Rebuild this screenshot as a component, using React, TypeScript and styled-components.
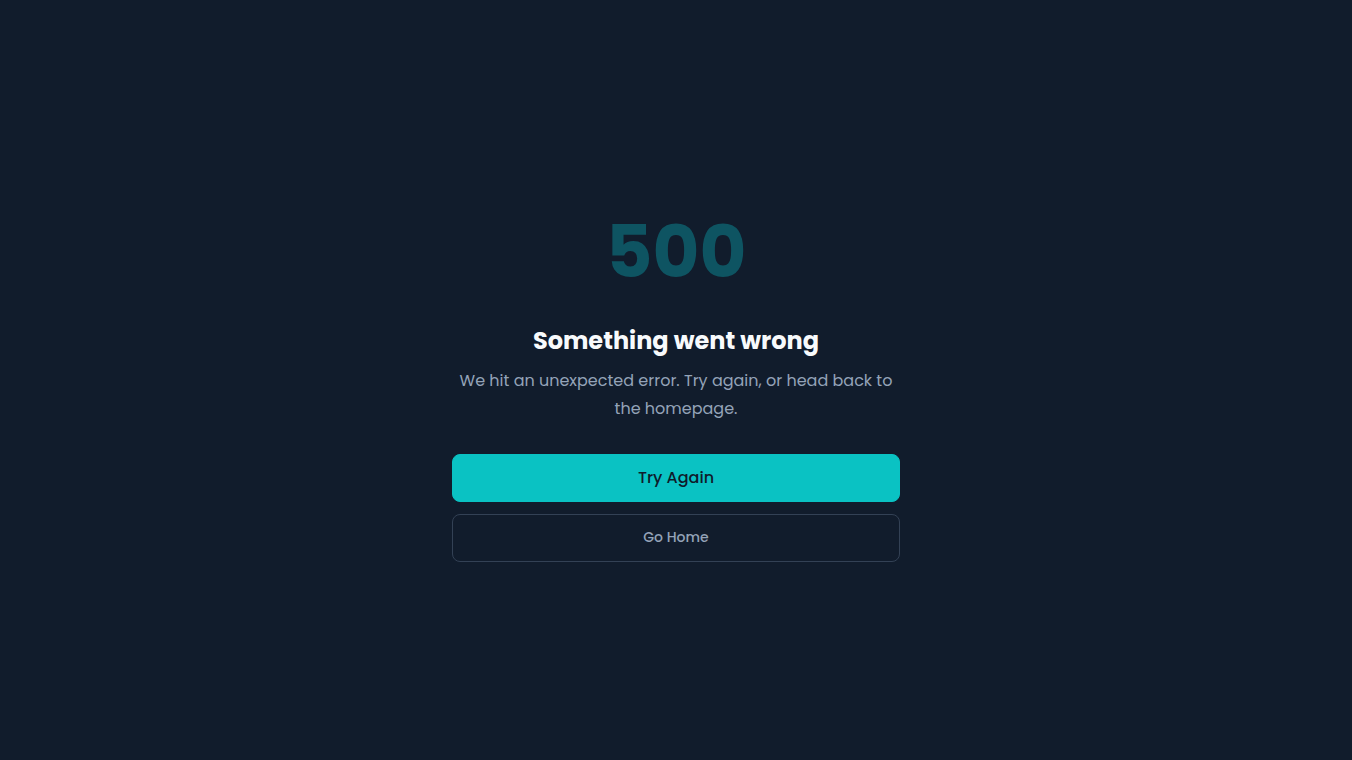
import React from "react";
import styled, { createGlobalStyle } from "styled-components";

const GlobalStyle = createGlobalStyle`
  * {
    box-sizing: border-box;
  }

  html,
  body {
    margin: 0;
    padding: 0;
    background-color: #111c2c;
  }

  body {
    font-family: Poppins, Inter, "Noto Sans", sans-serif;
  }
`;

const Page = styled.main`
  min-height: 100vh;
  display: flex;
  align-items: center;
  justify-content: center;
  padding-top: 13px;
  background-color: #111c2c;
`;

const Panel = styled.section`
  width: 448px;
  display: flex;
  flex-direction: column;
  align-items: stretch;
  text-align: center;
`;

const Code = styled.div`
  font-size: 72px;
  line-height: 80px;
  font-weight: 700;
  color: #0e5462;
  margin-bottom: 33px;
`;

const Title = styled.h1`
  margin: 0;
  font-size: 24px;
  line-height: 32px;
  font-weight: 700;
  color: #f8fafc;
`;

const Message = styled.p`
  margin: 10px 0 31px;
  font-size: 16px;
  line-height: 28px;
  color: #94a3b8;
`;

const Actions = styled.div`
  display: flex;
  flex-direction: column;
  gap: 12px;
`;

const Button = styled.button<{ $variant: "primary" | "ghost" }>`
  height: 48px;
  width: 100%;
  border-radius: 8px;
  font-family: inherit;
  cursor: pointer;
  border: 1px solid
    ${({ $variant }) => ($variant === "primary" ? "#0ac2c3" : "#334155")};
  background-color: ${({ $variant }) =>
    $variant === "primary" ? "#0ac2c3" : "transparent"};
  color: ${({ $variant }) => ($variant === "primary" ? "#0f1b2b" : "#94a3b8")};
  font-size: ${({ $variant }) => ($variant === "primary" ? "16px" : "14px")};
  font-weight: 500;
`;

export default function App() {
  return (
    <>
      <GlobalStyle />
      <Page>
        <Panel>
          <Code>500</Code>
          <Title>Something went wrong</Title>
          <Message>
            We hit an unexpected error. Try again, or head back to the
            homepage.
          </Message>
          <Actions>
            <Button $variant="primary">Try Again</Button>
            <Button $variant="ghost">Go Home</Button>
          </Actions>
        </Panel>
      </Page>
    </>
  );
}
